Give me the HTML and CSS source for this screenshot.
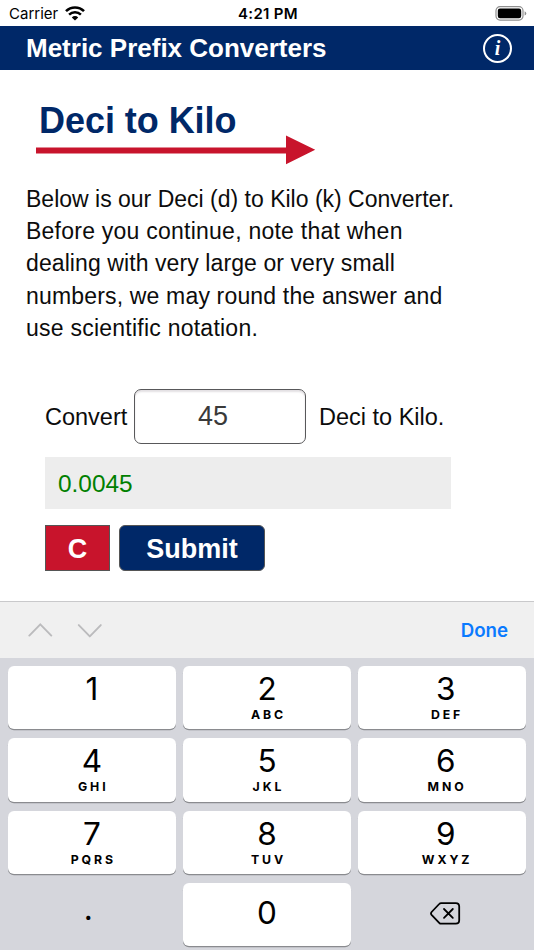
FILE: index.html
```html
<!DOCTYPE html>
<html lang="en">
<head>
    <meta charset="UTF-8">
    <meta name="viewport" content="width=device-width, initial-scale=1.0">
    <title>Metric Prefix Converters</title>
    <link rel="stylesheet" href="styles.css">
</head>
<body>
    <div class="status-bar">
        <div class="carrier">
            <span class="carrier-name">Carrier</span>
            <svg class="wifi" width="20" height="15" viewBox="0 0 20 15">
                <path d="M1 5.2a12.7 12.7 0 0 1 18 0" fill="none" stroke="#000" stroke-width="2.6"/>
                <path d="M4.1 8.6a8.4 8.4 0 0 1 11.8 0" fill="none" stroke="#000" stroke-width="2.5"/>
                <path d="M10 14.6l-3.2-3.2a4.6 4.6 0 0 1 6.4 0z"/>
            </svg>
        </div>
        <div class="time">4:21 PM</div>
        <div class="battery">
            <svg width="32" height="15" viewBox="0 0 32 15">
                <rect x="1" y=".7" width="27" height="13.4" rx="4" fill="none" stroke="#8f8f8f" stroke-width="1.2"/>
                <rect x="2.8" y="2.5" width="23.4" height="9.8" rx="2.2"/>
                <path d="M29.6 5.2q1.7.8 1.7 2.2t-1.7 2.2z" fill="#8f8f8f"/>
            </svg>
        </div>
    </div>
    <header>
        <h1>Metric Prefix Converters</h1>
        <div class="info">i</div>
    </header>
    <main>
        <h2>Deci to Kilo</h2>
        <svg class="arrow" width="280" height="30" viewBox="0 0 280 30">
            <path d="M0 12.4h250V.6l29.2 14.2L250 29.2V18.6H0z" fill="#c8142c"/>
        </svg>
        <p>
            <span class="line">Below is our Deci (d) to Kilo (k) Converter.</span>
            <span class="line wide">Before you continue, note that when</span>
            <span class="line snug">dealing with very large or very small</span>
            <span class="line medium">numbers, we may round the answer and</span>
            <span class="line wide">use scientific notation.</span>
        </p>
        <form class="converter">
            <div class="row">
                <label for="amount">Convert</label>
                <input type="text" id="amount" value="45">
                <span class="unit">Deci to Kilo.</span>
            </div>
            <div class="result">0.0045</div>
            <div class="buttons">
                <button type="reset" class="clear">C</button>
                <button type="button" class="submit">Submit</button>
            </div>
        </form>
    </main>
    <div class="toolbar">
        <svg width="74" height="16" viewBox="0 0 74 16" fill="none" stroke="#bbbbbd" stroke-width="1.9" stroke-linecap="round" stroke-linejoin="round">
            <path d="M1.3 13.6L12.3 2.3l11 11.3"/>
            <path d="M50.8 3.1l11 11.3 11-11.3"/>
        </svg>
        <span class="done">Done</span>
    </div>
    <div class="keypad">
        <div class="key"><b>1</b></div>
        <div class="key"><b>2</b><small>ABC</small></div>
        <div class="key right"><b>3</b><small>DEF</small></div>
        <div class="key"><b>4</b><small>GHI</small></div>
        <div class="key"><b>5</b><small>JKL</small></div>
        <div class="key right"><b>6</b><small>MNO</small></div>
        <div class="key"><b>7</b><small>PQRS</small></div>
        <div class="key"><b>8</b><small>TUV</small></div>
        <div class="key right"><b>9</b><small>WXYZ</small></div>
        <div class="key plain dot"><b>.</b></div>
        <div class="key zero"><b>0</b></div>
        <div class="key plain delete">
            <svg width="31" height="23" viewBox="0 0 31 23" fill="none" stroke="#000" stroke-width="1.8" stroke-linecap="round" stroke-linejoin="round">
                <path d="M11.2 1.1h14.6q3.4 0 3.4 3.4v13.8q0 3.4-3.4 3.4H11.2q-1.2 0-2-.9L1.6 12.8q-1.2-1.4 0-2.8L9.2 2q.8-.9 2-.9z"/>
                <path d="M14 7l8.8 8.8M22.8 7L14 15.8"/>
            </svg>
        </div>
    </div>
</body>
</html>
```
FILE: styles.css
```css
body {
    font-family: "Liberation Sans", Arial, sans-serif;
    margin: 0;
    width: 534px;
    height: 950px;
    overflow: hidden;
    display: flex;
    flex-direction: column;
    background-color: white;
    color: #0c0c0c;
}
.status-bar {
    height: 26px;
    flex: none;
    box-sizing: border-box;
    padding: 2px 7px 0 9px;
    display: grid;
    grid-template-columns: 1fr auto 1fr;
    align-items: center;
    font-family: Inter, sans-serif;
    font-size: 15px;
    color: black;
}
.carrier {
    display: flex;
    align-items: center;
    gap: 7px;
    margin-top: -1px;
}
.carrier-name {
    letter-spacing: 0;
}
.wifi {
    margin-top: -1px;
}
.time {
    font-weight: 600;
    font-size: 15px;
    letter-spacing: 0.3px;
    margin-top: -1px;
}
.battery {
    display: flex;
    justify-content: flex-end;
    margin-top: -2px;
}
header {
    height: 44px;
    flex: none;
    box-sizing: border-box;
    background-color: #002868;
    color: white;
    display: flex;
    justify-content: space-between;
    align-items: center;
    padding: 0 22px 0 26px;
}
h1 {
    margin: 0;
    font-size: 26px;
    line-height: 44px;
}
.info {
    width: 29px;
    height: 29px;
    box-sizing: border-box;
    border: 2px solid white;
    border-radius: 50%;
    margin-top: 1px;
    text-align: center;
    font: italic bold 20px/24px "Liberation Serif", serif;
}
main {
    height: 531px;
    flex: none;
    box-sizing: border-box;
    padding: 31px 0 0 26px;
}
h2 {
    margin: 0 0 0 13px;
    font-size: 36px;
    line-height: 40px;
    color: #002868;
    letter-spacing: -0.05px;
}
.arrow {
    display: block;
    margin: -6px 0 0 10px;
}
p {
    margin: 18px 0 0;
    font-size: 23px;
    line-height: 32.2px;
    white-space: nowrap;
}
.line {
    display: block;
}
.snug {
    letter-spacing: 0.09px;
}
.medium {
    letter-spacing: 0.17px;
}
.wide {
    letter-spacing: 0.24px;
}
.converter {
    margin: 45px 0 0 19px;
    width: 406px;
}
.row {
    display: flex;
    align-items: center;
    font-size: 23.5px;
    white-space: nowrap;
}
.row label {
    width: 89px;
    padding-top: 2px;
}
.row input {
    width: 172px;
    height: 55px;
    box-sizing: border-box;
    border: 1.5px solid #58585a;
    border-radius: 7px;
    box-shadow: inset 0 2px 2px #e3e0e3;
    padding: 0 14px 0 0;
    text-align: center;
    font-family: inherit;
    font-size: 27px;
    color: #3a3a3a;
}
.unit {
    margin-left: 13px;
    padding-top: 2px;
}
.result {
    margin-top: 13px;
    height: 52px;
    padding-left: 13px;
    background-color: #ededed;
    color: #008000;
    font-size: 24.4px;
    line-height: 53px;
}
.buttons {
    display: flex;
    gap: 9px;
    margin-top: 16px;
}
.buttons button {
    height: 46px;
    padding: 2px 0 0;
    border: 1px solid #555;
    color: white;
    font-family: inherit;
    font-weight: bold;
    font-size: 27px;
}
.buttons .clear {
    width: 65px;
    background-color: #c8142c;
}
.buttons .submit {
    width: 146px;
    border-radius: 6px;
    background-color: #002868;
}
.toolbar {
    height: 57px;
    flex: none;
    box-sizing: border-box;
    border-top: 1px solid #c9c9cb;
    background-color: #f0f0f0;
    padding: 0 26px 0 28px;
    display: flex;
    justify-content: space-between;
    align-items: center;
}
.done {
    font-family: Inter, sans-serif;
    font-weight: 600;
    font-size: 18.7px;
    line-height: 20px;
    margin-top: 2px;
    color: #0a7aff;
}
.keypad {
    flex: 1;
    padding: 8px 8px 0;
    background-color: #d5d6dc;
    display: grid;
    grid-template-columns: repeat(3, 1fr);
    grid-auto-rows: 63.3px;
    align-content: start;
    gap: 9px 7.5px;
    font-family: Inter, sans-serif;
    color: black;
}
.key {
    background-color: white;
    border-radius: 6px;
    box-shadow: 0 1.3px 0 #8a8b8f;
    display: flex;
    flex-direction: column;
    align-items: center;
    padding-top: 5px;
    box-sizing: border-box;
}
.key b {
    font-weight: 400;
    font-size: 31.5px;
    line-height: 36px;
}
.key small {
    font-weight: 700;
    font-size: 12.3px;
    line-height: 15px;
    letter-spacing: 2.9px;
    margin-right: -2.9px;
}
.right {
    padding-left: 7px;
}
.zero {
    padding: 0 0 4px;
    justify-content: center;
}
.plain {
    background: none;
    box-shadow: none;
    padding: 0;
    justify-content: center;
}
.dot {
    padding: 0 7px 12px 0;
}
.delete {
    padding: 0 0 3px 7px;
}
```
